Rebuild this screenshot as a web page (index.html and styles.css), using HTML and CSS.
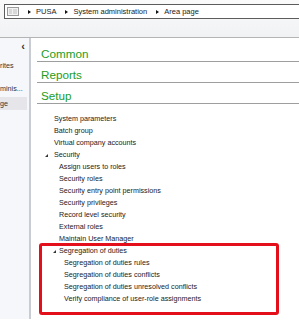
FILE: index.html
```html
<!DOCTYPE html>
<html lang="en">
<head>
    <meta charset="UTF-8">
    <title>Area page</title>
    <link rel="stylesheet" href="styles.css">
</head>
<body>
    <header class="topbar">
        <div class="crumbs">
            <svg class="crumb-icon" width="12" height="9" viewBox="0 0 12 9">
                <rect x="0.5" y="0.5" width="11" height="8" fill="#f2f2f2" stroke="#9a9a9a"/>
                <rect x="2" y="2" width="3" height="5" fill="#d8d8d8"/>
                <rect x="6" y="2" width="4" height="5" fill="#d8d8d8"/>
            </svg>
            <span class="arrow"></span>
            <span class="crumb">PUSA</span>
            <span class="arrow"></span>
            <span class="crumb">System administration</span>
            <span class="arrow"></span>
            <span class="crumb">Area page</span>
        </div>
    </header>

    <div class="main">
        <nav class="nav">
            <div class="collapse">&lsaquo;</div>
            <div class="nav-item nav-first">rites</div>
            <div class="nav-item nav-second">minis...</div>
            <div class="nav-item nav-active">ge</div>
        </nav>

        <section class="content">
            <h2 class="group">Common</h2>
            <h2 class="group">Reports</h2>
            <h2 class="group">Setup</h2>

            <ul class="tree">
                <li class="lvl1">System parameters</li>
                <li class="lvl1">Batch group</li>
                <li class="lvl1">Virtual company accounts</li>
                <li class="lvl1 folder"><span class="tri"></span>Security</li>
                <li class="lvl2">Assign users to roles</li>
                <li class="lvl2">Security roles</li>
                <li class="lvl2">Security entry point permissions</li>
                <li class="lvl2">Security privileges</li>
                <li class="lvl2">Record level security</li>
                <li class="lvl2">External roles</li>
                <li class="lvl2">Maintain User Manager</li>
                <li class="lvl2 folder sub"><span class="tri"></span>Segregation of duties</li>
                <li class="lvl3">Segregation of duties rules</li>
                <li class="lvl3">Segregation of duties conflicts</li>
                <li class="lvl3">Segregation of duties unresolved conflicts</li>
                <li class="lvl3">Verify compliance of user-role assignments</li>
            </ul>

            <div class="highlight-box"></div>
        </section>
    </div>
</body>
</html>
```

FILE: styles.css
```css
* {
    margin: 0;
    padding: 0;
    box-sizing: border-box;
}

body {
    width: 299px;
    height: 320px;
    overflow: hidden;
    background: #fff;
    color: #222;
    font-family: "Liberation Sans", Arial, sans-serif;
}

.topbar {
    height: 38px;
    padding: 4px 0 0 4px;
    background: linear-gradient(#fafafa, #f1f2f4);
    border-bottom: 1px solid #b4b4b4;
}

.crumbs {
    display: flex;
    align-items: center;
    height: 15px;
    background: #fff;
    border: 1px solid #5c5c5c;
    border-right: none;
    padding-left: 2px;
    font-size: 7.5px;
    color: #222;
}

.crumb-icon {
    display: block;
    margin-right: 9px;
}

.arrow {
    width: 0;
    height: 0;
    border-top: 2.5px solid transparent;
    border-bottom: 2.5px solid transparent;
    border-left: 3px solid #111;
    margin-right: 5px;
}

.crumb {
    margin-right: 9px;
}

.main {
    display: flex;
    height: 281px;
}

.nav {
    width: 31px;
    background: #f6f7fa;
    border-right: 2px solid #c9ccd2;
    font-size: 7.2px;
    color: #333;
}

.collapse {
    text-align: right;
    padding-right: 4px;
    font-size: 11px;
    font-weight: bold;
    line-height: 10px;
    height: 12px;
    margin-top: 3px;
    color: #333;
}

.nav-item {
    height: 12px;
    line-height: 12px;
    white-space: nowrap;
    overflow: hidden;
}

.nav-first {
    margin-top: 7px;
}

.nav-second {
    margin-top: 11px;
}

.nav-active {
    margin-top: 2px;
    height: 13px;
    line-height: 13px;
    margin-right: 2px;
    background: #e6e6ea;
}

.content {
    position: relative;
    flex: 1;
    padding-left: 6px;
    padding-top: 3px;
}

.group {
    height: 21px;
    padding-top: 6px;
    padding-left: 4px;
    font-size: 11.7px;
    line-height: 14px;
    font-weight: normal;
    color: #239d23;
    border-bottom: 1px solid #9e9e9e;
}

.tree {
    list-style: none;
    padding-top: 9px;
    font-size: 7.2px;
    color: #222;
}

.tree li {
    position: relative;
    height: 12px;
    line-height: 12px;
    white-space: nowrap;
}

.lvl1 {
    padding-left: 17px;
}

.lvl2 {
    padding-left: 22px;
}

.lvl3 {
    padding-left: 27px;
}

.tri {
    position: absolute;
    top: 5px;
    left: 8px;
    width: 0;
    height: 0;
    border-left: 3px solid transparent;
    border-bottom: 3px solid #333;
}

.sub .tri {
    left: 16px;
}

.highlight-box {
    position: absolute;
    left: 8px;
    top: 205px;
    width: 240px;
    height: 72px;
    border: 3px solid #e3101c;
    border-radius: 3px;
}
```
